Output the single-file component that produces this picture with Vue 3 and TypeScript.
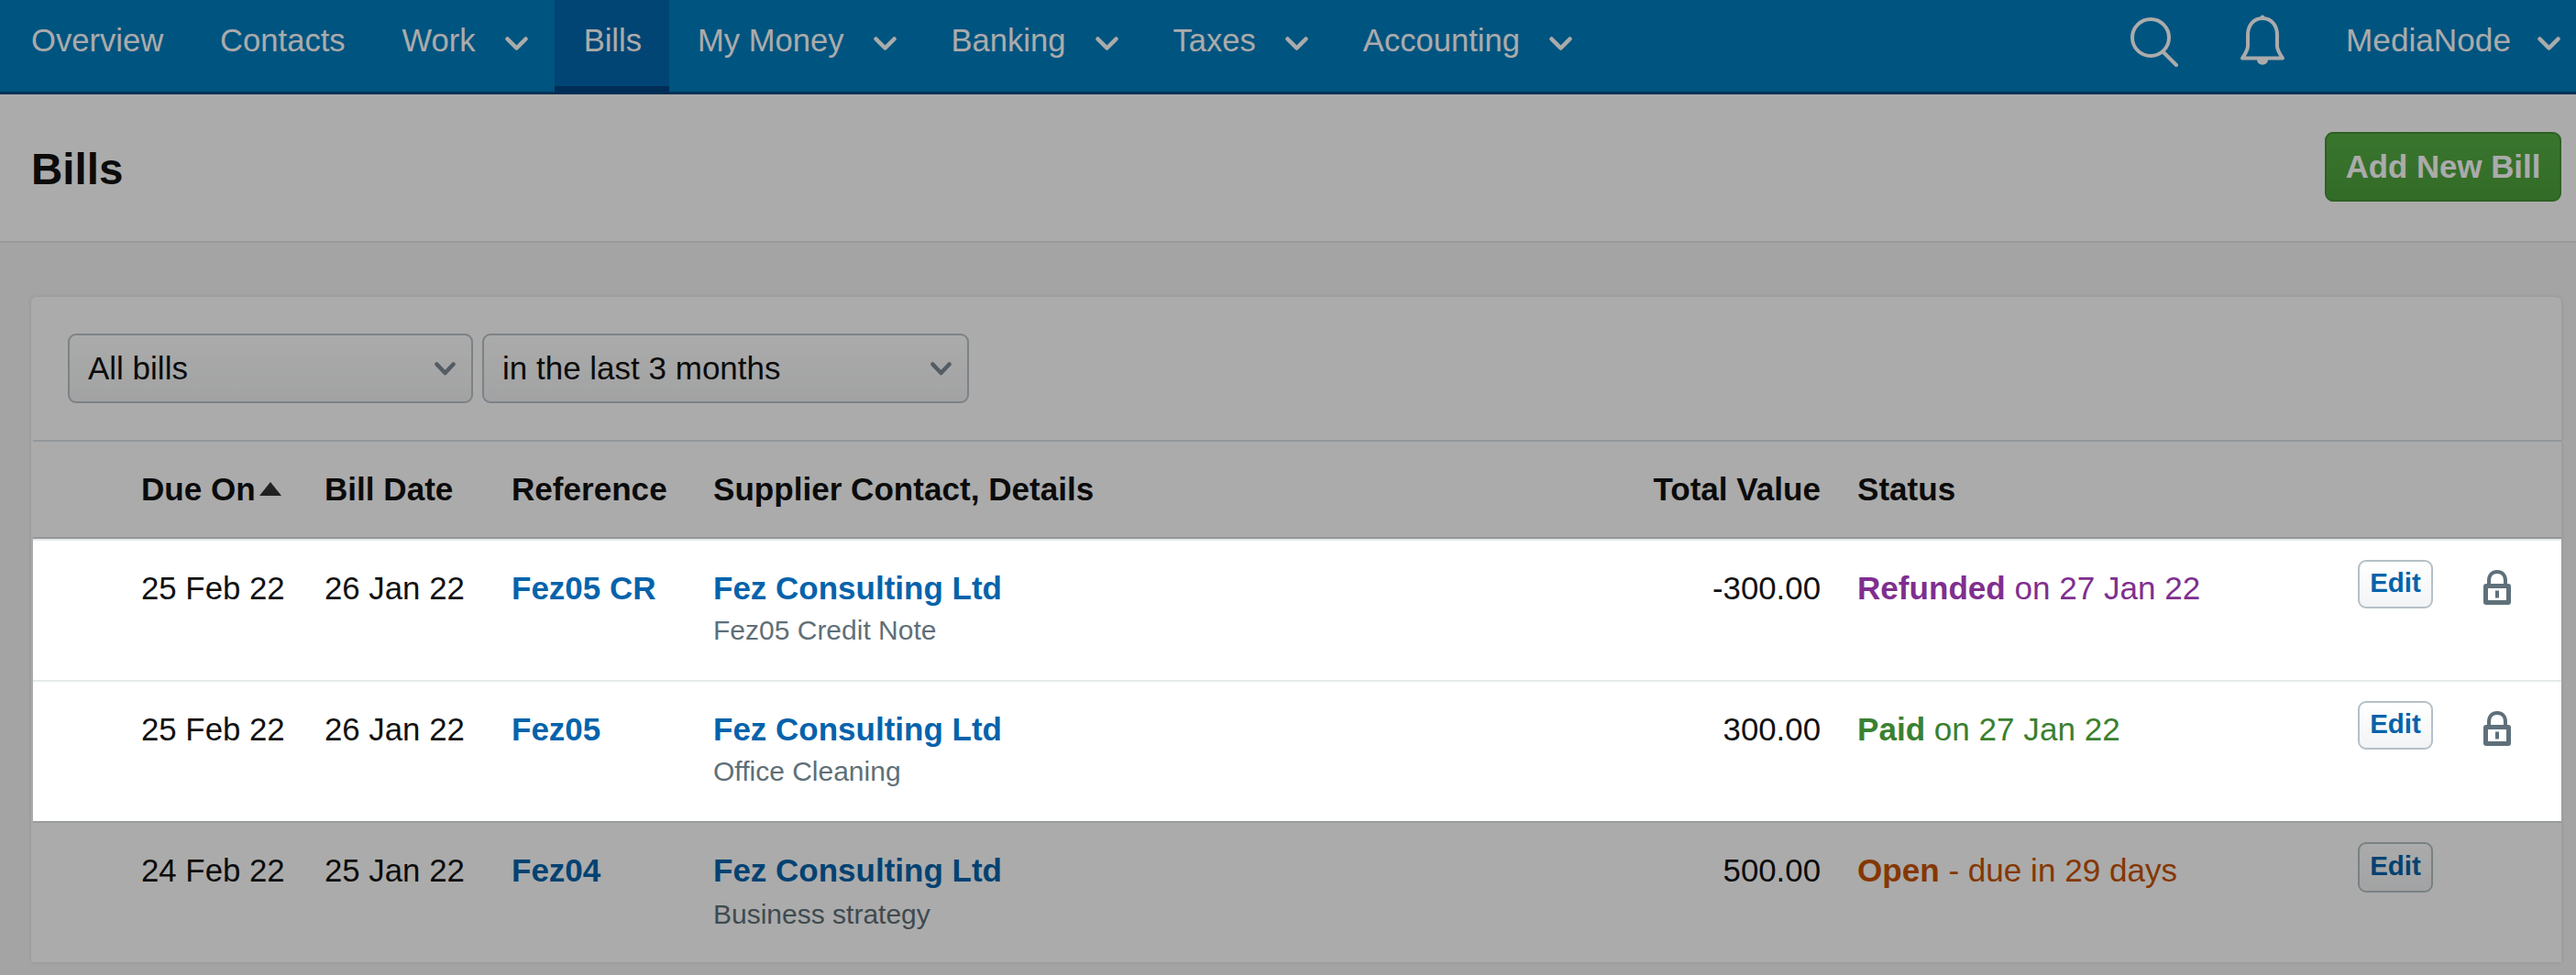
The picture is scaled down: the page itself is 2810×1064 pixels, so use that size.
<script setup lang="ts">
interface NavItem { label: string; caret?: boolean; active?: boolean }
interface Bill {
  due: string; date: string; ref: string; contact: string; details: string; total: string;
  statusWord: string; statusRest: string; tone: string; lit: boolean; locked: boolean;
}
const navItems: NavItem[] = [
  { label: 'Overview' },
  { label: 'Contacts' },
  { label: 'Work', caret: true },
  { label: 'Bills', active: true },
  { label: 'My Money', caret: true },
  { label: 'Banking', caret: true },
  { label: 'Taxes', caret: true },
  { label: 'Accounting', caret: true },
]
const bills: Bill[] = [
  { due: '25 Feb 22', date: '26 Jan 22', ref: 'Fez05 CR', contact: 'Fez Consulting Ltd', details: 'Fez05 Credit Note', total: '-300.00', statusWord: 'Refunded', statusRest: ' on 27 Jan 22', tone: 'refunded', lit: true, locked: true },
  { due: '25 Feb 22', date: '26 Jan 22', ref: 'Fez05', contact: 'Fez Consulting Ltd', details: 'Office Cleaning', total: '300.00', statusWord: 'Paid', statusRest: ' on 27 Jan 22', tone: 'paid', lit: true, locked: true },
  { due: '24 Feb 22', date: '25 Jan 22', ref: 'Fez04', contact: 'Fez Consulting Ltd', details: 'Business strategy', total: '500.00', statusWord: 'Open', statusRest: ' - due in 29 days', tone: 'open', lit: false, locked: false },
]
const filters: { label: string; wide: boolean }[] = [
  { label: 'All bills', wide: false },
  { label: 'in the last 3 months', wide: true },
]
</script>

<template>
  <div class="page">
    <nav class="nav">
      <a v-for="item in navItems" :key="item.label" class="nav-item" :class="{ active: item.active, 'has-caret': item.caret }">
        <span>{{ item.label }}</span>
        <svg v-if="item.caret" class="caret" viewBox="0 0 25 15"><path d="M2.500 2.500 12.500 12.500 22.500 2.500" /></svg>
      </a>
      <div class="nav-right">
        <svg class="search" viewBox="0 0 52 54"><circle cx="22" cy="22" r="20" /><path d="M36 38 50 52" /></svg>
        <svg class="bell" viewBox="0 0 50 56">
          <path d="M25 4C14.500 4 9 12.500 9 22V34C9 39 6.500 42 3 47.500H47C43.500 42 41 39 41 34V22C41 12.500 35.500 4 25 4Z" />
          <circle class="fill" cx="25" cy="3" r="2.500" />
          <path class="fill" d="M19 49H31C31 56.500 19 56.500 19 49Z" />
        </svg>
        <span class="account">MediaNode</span>
        <svg class="caret account-caret" viewBox="0 0 25 15"><path d="M2.500 2.500 12.500 12.500 22.500 2.500" /></svg>
      </div>
    </nav>

    <header class="title-bar">
      <h1>Bills</h1>
      <button class="add-btn">Add New Bill</button>
    </header>

    <main class="content">
      <section class="card">
        <div class="filters">
          <div v-for="f in filters" :key="f.label" class="select" :class="{ wide: f.wide }">
            <span>{{ f.label }}</span>
            <svg viewBox="0 0 23 15"><path d="M2.500 2.500 11.500 12 20.500 2.500" /></svg>
          </div>
        </div>

        <div class="grid head">
          <div class="c-due">Due On<svg class="sort" viewBox="0 0 24 15"><path d="M12 0 24 15H0Z" /></svg></div>
          <div>Bill Date</div>
          <div>Reference</div>
          <div>Supplier Contact, Details</div>
          <div class="c-total">Total Value</div>
          <div class="c-status">Status</div>
        </div>

        <div v-for="b in bills" :key="b.ref" class="grid row" :class="{ lit: b.lit }">
          <div class="c-due">{{ b.due }}</div>
          <div>{{ b.date }}</div>
          <a class="link">{{ b.ref }}</a>
          <div>
            <a class="link">{{ b.contact }}</a>
            <div class="details">{{ b.details }}</div>
          </div>
          <div class="c-total">{{ b.total }}</div>
          <div class="c-status" :class="b.tone"><strong>{{ b.statusWord }}</strong>{{ b.statusRest }}</div>
          <div class="c-edit"><button class="edit-btn">Edit</button></div>
          <div class="c-lock">
            <svg v-if="b.locked" class="lock" viewBox="0 0 30 38">
              <path class="shackle" d="M6 20V11.500C6 6 9.500 2 15 2S24 6 24 11.500V20" />
              <path fill-rule="evenodd" class="body" d="M3 15H27A3 3 0 0 1 30 18V35A3 3 0 0 1 27 38H3A3 3 0 0 1 0 35V18A3 3 0 0 1 3 15ZM5 20V33H25V20ZM13 22.500H17V30.500H13Z" />
            </svg>
          </div>
        </div>
      </section>
    </main>

    <div class="dim"></div>
  </div>
</template>

<style>
html, body { margin: 0; background: #f5f5f5; overflow: hidden; }
</style>

<style scoped>
.page {
  position: relative;
  width: 2810px;
  height: 1064px;
  overflow: hidden;
  font-family: "Liberation Sans", Arial, sans-serif;
  font-size: 34.8px;
  color: #111;
  background: #f5f5f5;
}
.dim {
  position: absolute;
  inset: 0;
  background: rgba(0, 0, 0, 0.33);
  z-index: 1;
}

/* nav */
.nav {
  display: flex;
  height: 100px;
  padding-left: 3px;
  background: #007ebf;
  border-bottom: 3px solid #004d80;
  color: #fff;
  font-size: 34.6px;
}
.nav-item {
  display: flex;
  align-items: flex-start;
  padding: 24px 31px 0;
  line-height: 40px;
  height: 100px;
  box-sizing: border-box;
}
.nav-item.has-caret { gap: 32px; padding-right: 29px; }
.nav-item.active {
  background: #0068ae;
  height: 103px;
  padding: 24px 30px 0 32px;
  border-bottom: 9px solid #004480;
}
.caret { width: 25px; height: 15px; margin-top: 16px; flex: none; }
.caret path { fill: none; stroke: #fff; stroke-width: 4.500; stroke-linecap: round; stroke-linejoin: round; }
.nav-right { display: flex; align-items: flex-start; margin-left: auto; position: relative; }
.search { width: 52px; height: 54px; margin-top: 19px; fill: none; stroke: #fff; stroke-width: 4; stroke-linecap: round; }
.bell { width: 50px; height: 56px; margin: 16px 0 0 67px; fill: none; stroke: #fff; stroke-width: 4; stroke-linejoin: round; }
.bell .fill { fill: #fff; stroke: none; }
.account { margin: 24px 0 0 66px; line-height: 40px; font-size: 35.200px; }
.account-caret { margin: 40px 17px 0 29px; }

/* title */
.title-bar {
  height: 162px;
  box-sizing: border-box;
  display: flex;
  align-items: flex-start;
  justify-content: space-between;
  padding: 41px 16px 0 34px;
  background: #fff;
  border-bottom: 2px solid #e2e6e8;
}
h1 { margin: 9px 0 0; font-size: 47.5px; line-height: 64px; font-weight: 700; }
.add-btn {
  width: 258px;
  height: 76px;
  box-sizing: border-box;
  padding: 0;
  font: 700 34.8px "Liberation Sans", Arial, sans-serif;
  color: #fff;
  background: linear-gradient(#57af45, #4ba13b);
  border: 2px solid #428f34;
  border-radius: 9px;
}

/* content */
.content { padding: 59px 16px 0 34px; }
.card {
  background: #fff;
  border-radius: 6px 6px 0 0;
  box-shadow: 0 0 5px rgba(0, 0, 0, 0.1);
  padding-left: 2px;
}
.filters {
  display: flex;
  gap: 10px;
  padding: 40px 0 41px 38px;
  height: 158px;
  box-sizing: border-box;
  border-bottom: 2px solid #dce1e4;
  font-size: 35px;
}
.select {
  width: 442px;
  height: 76px;
  box-sizing: border-box;
  display: flex;
  align-items: center;
  justify-content: space-between;
  padding: 0 17px 0 20px;
  background: linear-gradient(#fff, #f2f3f4);
  border: 2px solid #b9c2ca;
  border-radius: 9px;
}
.select.wide { width: 531px; }
.select svg { width: 23px; height: 15px; fill: none; stroke: #7e8b94; stroke-width: 4.500; stroke-linecap: round; stroke-linejoin: round; }

/* table */
.grid {
  display: grid;
  grid-template-columns: 318px 204px 220px 800px 1fr 586px 82px 140px;
}
.c-due { padding-left: 118px; }
.head {
  height: 106px;
  box-sizing: border-box;
  font-weight: 700;
  font-size: 35.100px;
  align-items: center;
  border-bottom: 2px solid #dce1e4;
}
.head > .c-due { display: flex; align-items: center; }
.sort { width: 24px; height: 15px; margin-left: 4px; margin-top: -1px; fill: #333; }
.c-total { text-align: right; }
.c-status { padding-left: 40px; font-size: 35.100px; }
.row {
  background: #fff;
  height: 154px;
  box-sizing: border-box;
  padding-top: 29px;
  line-height: 46px;
  border-top: 2px solid #e4e9ea;
}
.row.lit { position: relative; z-index: 2; }
.link { color: #0563ab; font-weight: 700; display: block; font-size: 35px; }
.details { font-size: 30px; line-height: 46px; color: #5f6f78; }
.row:not(.lit) .details { margin-top: 2px; }
.refunded { color: #7f2f8f; }
.paid { color: #3b8030; }
.open { color: #c65303; }
.c-edit { margin-top: -8px; }
.edit-btn {
  width: 82px;
  height: 53px;
  box-sizing: border-box;
  padding: 0 0 3px;
  font: 700 29.500px "Liberation Sans", Arial, sans-serif;
  color: #0563ab;
  background: linear-gradient(#fff, #f2f4f5);
  border: 2px solid #b5c0c7;
  border-radius: 9px;
  display: block;
}
.row:not(.lit) .edit-btn { height: 55px; }
.c-lock { padding-left: 55px; }
.lock { width: 30px; height: 38px; display: block; margin-top: 3px; }
.lock .shackle { fill: none; stroke: #5f707a; stroke-width: 4; }
.lock .body { fill: #5f707a; }
</style>
